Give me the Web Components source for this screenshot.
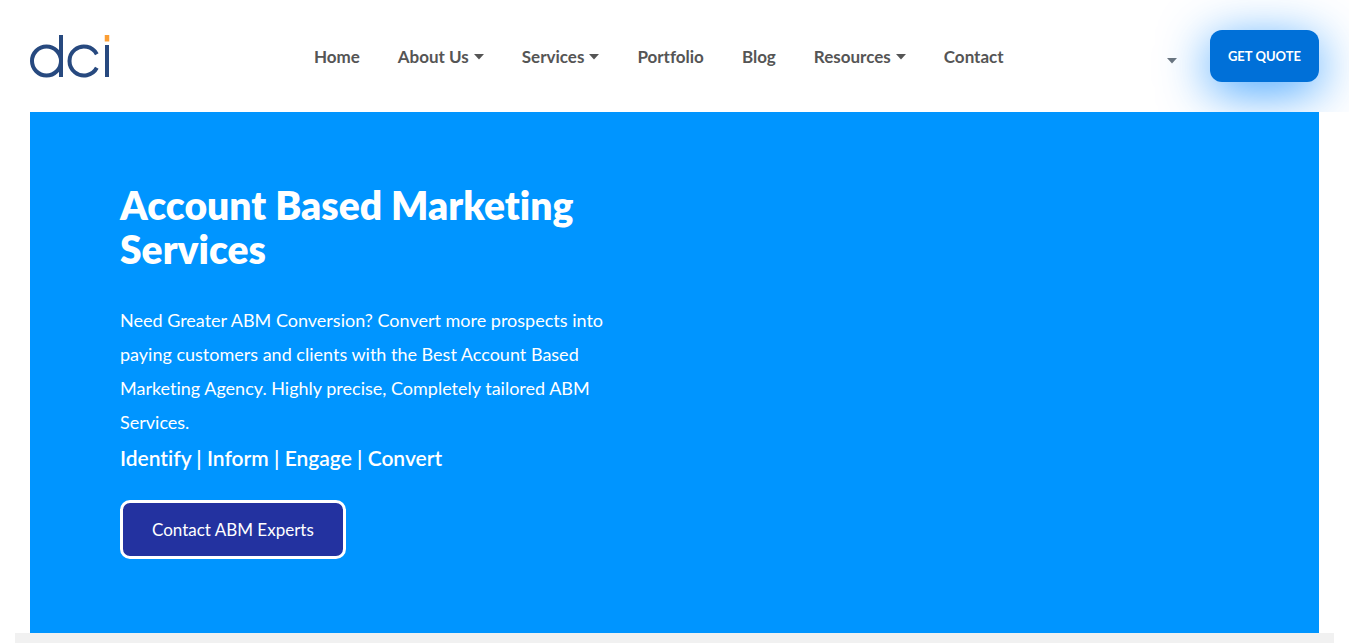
<!DOCTYPE html>
<html lang="en">
<head>
<meta charset="utf-8">
<meta name="viewport" content="width=device-width, initial-scale=1">
<title>Account Based Marketing Services</title>
<style>
body { margin: 0; background: #fff; font-family: Lato, "Liberation Sans", sans-serif; font-variant-ligatures: none; }
</style>
</head>
<body>
<site-page>
  <site-header slot="header">
    <site-logo slot="logo"></site-logo>
    <nav-item>Home</nav-item>
    <nav-item menu>About Us</nav-item>
    <nav-item menu>Services</nav-item>
    <nav-item>Portfolio</nav-item>
    <nav-item>Blog</nav-item>
    <nav-item menu>Resources</nav-item>
    <nav-item>Contact</nav-item>
    <language-toggle slot="actions"></language-toggle>
    <quote-button slot="actions">GET QUOTE</quote-button>
  </site-header>
  <hero-banner>
    <span slot="title">Account Based Marketing Services</span>
    <span slot="text">Need Greater ABM Conversion? Convert more prospects into paying customers and clients with the Best Account Based Marketing Agency. Highly precise, Completely tailored ABM Services.</span>
    <span slot="tagline">Identify | Inform | Engage | Convert</span>
    <span slot="action">Contact ABM Experts</span>
  </hero-banner>
</site-page>
<script>
const define = (name, html, setup) => {
  const template = document.createElement('template');
  template.innerHTML = html;
  customElements.define(name, class extends HTMLElement {
    connectedCallback() {
      if (this.shadowRoot) return;
      this.attachShadow({ mode: 'open' }).append(template.content.cloneNode(true));
      if (setup) setup(this);
    }
  });
};

define('site-page', `
<style>
:host { display: flex; flex-direction: column; min-height: 100vh; margin-right: 17px; }
main { padding: 0 30px; }
.next { flex: 1; min-height: 10px; margin: 0 15px; background: #f1f1f1; }
</style>
<slot name="header"></slot>
<main><slot></slot></main>
<div class="next"></div>`);

define('site-header', `
<style>
:host { display: block; overflow: hidden; }
header { display: grid; grid-template-columns: 9fr auto 10fr; align-items: center; padding: 30px; }
nav { display: flex; gap: 38px; padding-top: 2px; }
.actions { display: flex; align-items: center; justify-content: flex-end; gap: 33px; }
</style>
<header>
  <slot name="logo"></slot>
  <nav aria-label="Main"><slot></slot></nav>
  <div class="actions"><slot name="actions"></slot></div>
</header>`);

define('site-logo', `
<style>
:host { display: block; }
a { display: block; width: 80px; padding-top: 2px; }
svg { display: block; }
</style>
<a href="#" aria-label="dci home">
<svg width="80" height="44" viewBox="0 0 80 44" fill="none" stroke="#27497f" stroke-width="4">
  <circle cx="16.5" cy="26" r="14.5"/>
  <path d="M31 0V42M77 10V42"/>
  <path d="M66.800 19.200A14.500 14.500 0 1 0 66.800 32.800"/>
  <path d="M77 0V6.500" stroke="#fb9e34" stroke-width="4.500"/>
</svg></a>`);

define('nav-item', `
<style>
:host { display: block; }
a { display: flex; align-items: center; gap: 5px; color: #555; font-size: 17px; line-height: 24px; font-weight: 700; text-decoration: none; white-space: nowrap; }
svg { display: none; fill: currentColor; }
:host([menu]) svg { display: block; }
</style>
<a href="#"><slot></slot><svg width="10" height="6" viewBox="0 0 10 6" aria-hidden="true"><path d="M0 0H10L5 5.500Z"/></svg></a>`);

define('language-toggle', `
<style>
:host { display: block; padding-top: 10px; }
button { display: block; border: 0; padding: 0; background: none; color: #6c757d; }
svg { display: block; fill: currentColor; }
</style>
<button type="button" aria-label="Language"><svg width="10" height="6" viewBox="0 0 10 6"><path d="M0 0H10L5 5.500Z"/></svg></button>`);

define('quote-button', `
<style>
:host { display: block; }
button { display: block; padding: 16px 18px; border: 0; border-radius: 12px; background: #0070d8; box-shadow: 0 10px 50px #0084ffc0; color: #fff; font: 700 13px/20px Lato, sans-serif; white-space: nowrap; }
</style>
<button type="button"><slot></slot></button>`);

define('hero-banner', `
<style>
:host { display: block; background: #0095ff; color: #fff; padding: 71px 90px 74px; }
.copy { max-width: 500px; }
h1 { margin: 0 0 32px; font-size: 39px; line-height: 44px; font-weight: 800; }
p { margin: 0; font-size: 18px; line-height: 34px; }
h2 { margin: 0 0 23px; font-size: 21px; line-height: 38px; font-weight: 600; }
a { display: inline-block; padding: 15px 29px 14px; border: 3px solid #fff; border-radius: 10px; background: #2332a0; color: #fff; font-size: 17px; line-height: 24px; text-decoration: none; vertical-align: top; }
</style>
<div class="copy">
  <h1><slot name="title"></slot></h1>
  <p><slot name="text"></slot></p>
  <h2><slot name="tagline"></slot></h2>
  <a href="#"><slot name="action"></slot></a>
</div>`);
</script>
</body>
</html>
